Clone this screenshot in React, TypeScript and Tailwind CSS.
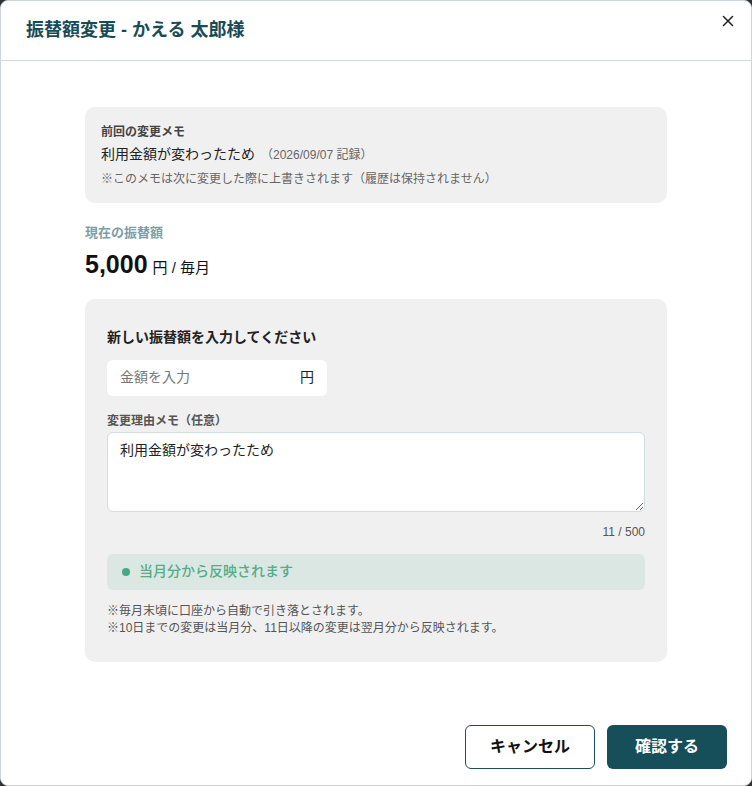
import { X } from "lucide-react";

export default function App() {
  return (
    <div className="h-[786px] w-[752px] bg-[#2f3335] font-['Liberation_Sans','Noto_Sans_CJK_JP',sans-serif]">
      <div className="flex h-full w-full flex-col overflow-hidden rounded-[8px] border border-[#cdd6d9] bg-white">
        {/* header */}
        <div className="relative flex h-[60px] shrink-0 items-center border-b border-[#d3d9dc] px-[25px]">
          <h1 className="text-[18px] font-bold text-[#174b55]">振替額変更 - かえる 太郎様</h1>
          <button className="absolute right-[10px] top-[7px] p-1 text-[#222]">
            <X size={18} strokeWidth={2} />
          </button>
        </div>

        {/* body */}
        <div className="flex flex-1 flex-col px-[84px] pt-[46px]">
          <div className="rounded-[10px] bg-[#f0f0f0] px-[16px] pb-[15px] pt-[16px]">
            <p className="text-[12px] font-bold leading-[18px] text-[#444]">前回の変更メモ</p>
            <p className="mt-[2px] text-[14px] leading-[22px] text-[#222]">
              利用金額が変わったため
              <span className="ml-[6px] text-[12px] text-[#666]">（2026/09/07 記録）</span>
            </p>
            <p className="mt-[4px] text-[12px] leading-[18px] text-[#666]">
              ※このメモは次に変更した際に上書きされます（履歴は保持されません）
            </p>
          </div>

          <p className="mt-[20px] text-[13px] font-bold leading-[20px] text-[#7c9ea6]">現在の振替額</p>
          <p className="mt-[7px] flex items-baseline text-[#111]">
            <span className="text-[25px] font-bold leading-[28px]">5,000</span>
            <span className="ml-[5px] text-[15px]">円 / 毎月</span>
          </p>

          <div className="mt-[19px] rounded-[10px] bg-[#f0f0f0] px-[22px] pb-[25px] pt-[27px]">
            <p className="text-[14px] font-bold leading-[22px] text-[#222]">新しい振替額を入力してください</p>
            <div className="mt-[12px] flex h-[36px] w-[220px] items-center justify-between rounded-[6px] bg-white px-[13px]">
              <span className="text-[14px] text-[#777]">金額を入力</span>
              <span className="text-[14px] text-[#222]">円</span>
            </div>

            <p className="mt-[16px] text-[12px] font-bold leading-[18px] text-[#555]">変更理由メモ（任意）</p>
            <textarea
              defaultValue="利用金額が変わったため"
              className="mt-[2px] block h-[80px] w-full resize-y rounded-[6px] border border-[#cfdde1] bg-white px-[12px] pb-[8px] pt-[6px] text-[14px] leading-[22px] text-[#222] outline-none"
            />
            <p className="mt-[11px] text-right text-[12px] leading-[18px] text-[#555]">11 / 500</p>

            <div className="mt-[13px] flex h-[36px] items-center gap-[9px] rounded-[6px] bg-[#dbe7e3] px-[15px]">
              <span className="h-[8px] w-[8px] rounded-full bg-[#4aa783]" />
              <span className="text-[14px] font-medium text-[#56ab88]">当月分から反映されます</span>
            </div>

            <div className="mt-[13px] text-[12px] leading-[17px] text-[#555]">
              <p>※毎月末頃に口座から自動で引き落とされます。</p>
              <p>※10日までの変更は当月分、11日以降の変更は翌月分から反映されます。</p>
            </div>
          </div>
        </div>

        {/* footer */}
        <div className="flex justify-end gap-[12px] px-[24px] pb-[16px]">
          <button className="h-[44px] w-[130px] rounded-[6px] border border-[#1c4f5a] bg-white text-[16px] font-bold text-[#111]">
            キャンセル
          </button>
          <button className="h-[44px] w-[120px] rounded-[6px] bg-[#164e59] text-[16px] font-bold text-white">
            確認する
          </button>
        </div>
      </div>
    </div>
  );
}
